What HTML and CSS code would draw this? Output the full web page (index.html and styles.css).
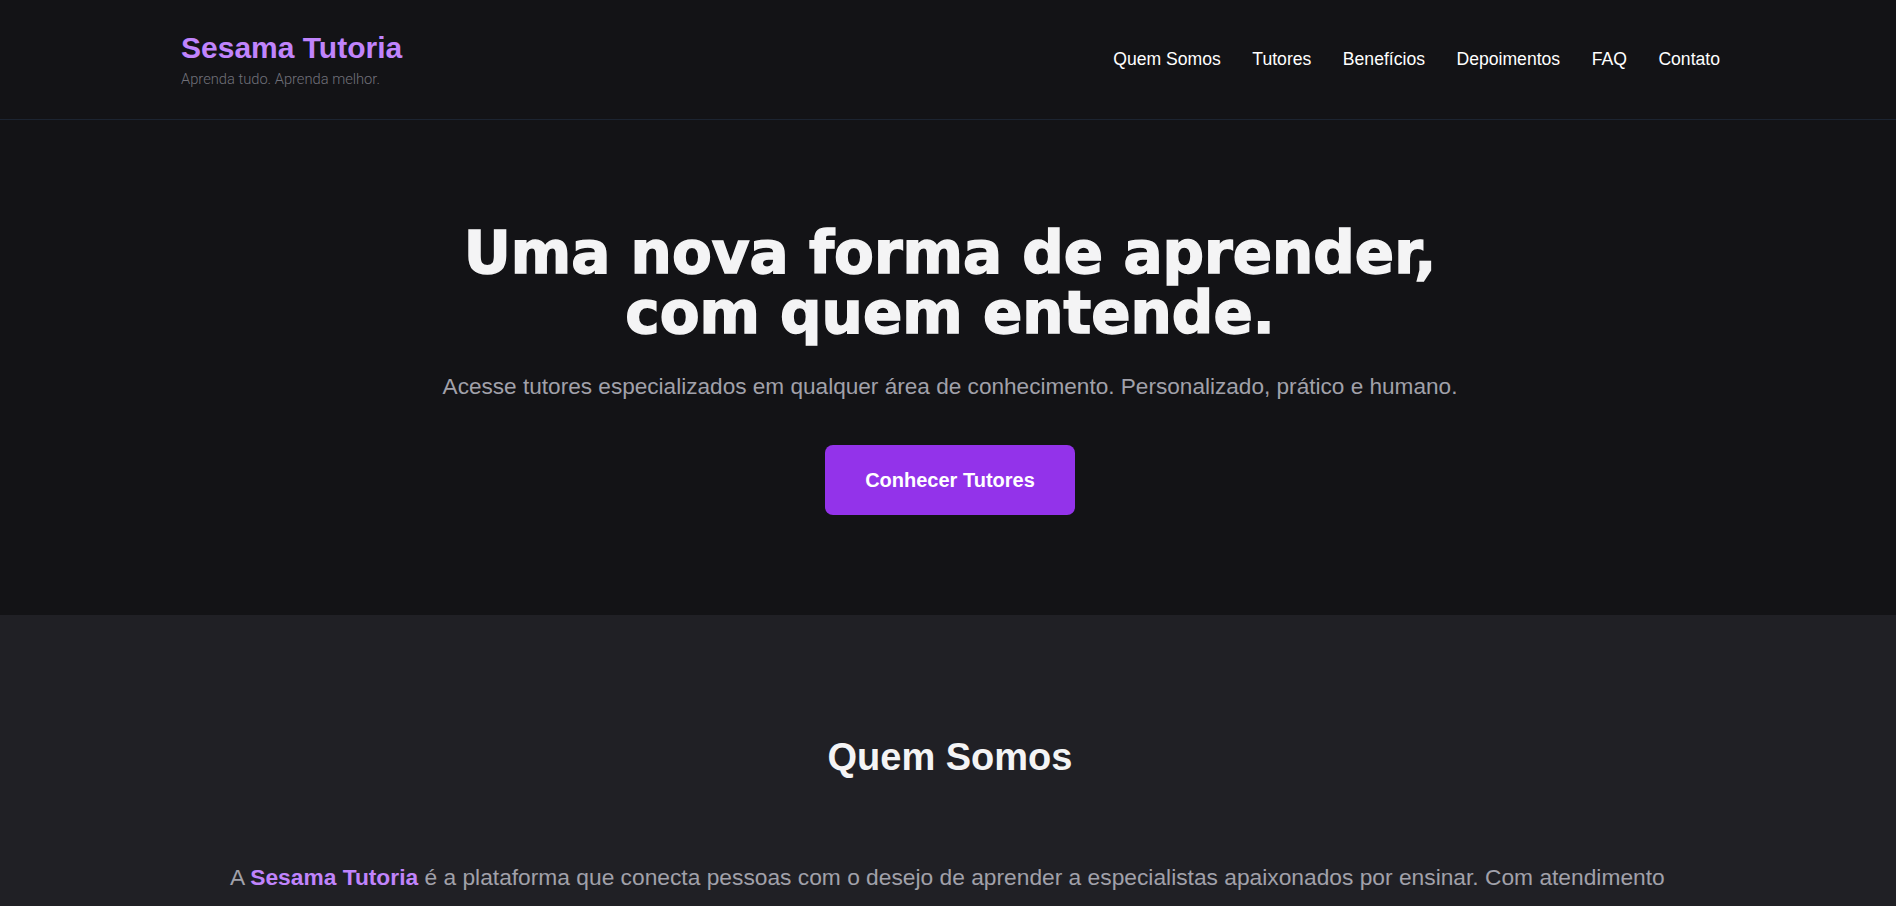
FILE: index.html
```html
<!DOCTYPE html>
<html lang="pt-BR">
<head>
<meta charset="utf-8">
<title>Sesama Tutoria</title>
<link rel="stylesheet" href="styles.css">
</head>
<body>
<header class="site-header">
  <div class="container header-inner">
    <div class="brand">
      <a class="logo" href="#">Sesama Tutoria</a>
      <span class="tagline">Aprenda tudo. Aprenda melhor.</span>
    </div>
    <nav class="main-nav">
      <a href="#quem-somos">Quem Somos</a>
      <a href="#tutores">Tutores</a>
      <a href="#beneficios">Benefícios</a>
      <a href="#depoimentos">Depoimentos</a>
      <a href="#faq">FAQ</a>
      <a href="#contato">Contato</a>
    </nav>
  </div>
</header>
<main>
  <section class="hero">
    <div class="container hero-inner">
      <h1 class="hero-title">Uma nova forma de aprender,<br>com quem entende.</h1>
      <p class="hero-sub">Acesse tutores especializados em qualquer área de conhecimento. Personalizado, prático e humano.</p>
      <a class="btn-primary" href="#tutores">Conhecer Tutores</a>
    </div>
  </section>
  <section class="about" id="quem-somos">
    <div class="container">
      <h2 class="section-title">Quem Somos</h2>
      <p class="about-text">A <strong class="brand-mention">Sesama Tutoria</strong> é a plataforma que conecta pessoas com o desejo de aprender a especialistas apaixonados por ensinar. Com atendimento personalizado e flexível, ajudamos cada aluno a alcançar seus objetivos no seu próprio ritmo.</p>
    </div>
  </section>
</main>
</body>
</html>
```
FILE: styles.css
```css
* { box-sizing: border-box; }

html, body {
  margin: 0;
  padding: 0;
}

body {
  background: #131316;
  color: #f4f4f5;
  font-family: "Liberation Sans", Arial, sans-serif;
}

a { text-decoration: none; color: inherit; }

.container {
  max-width: 1544px;
  margin: 0 auto;
  padding-left: 4px;
}

/* Header */
.site-header {
  background: #131316;
  border-bottom: 1px solid #1c2431;
}

.header-inner {
  height: 119px;
  display: flex;
  align-items: center;
  justify-content: space-between;
}

.brand {
  display: flex;
  flex-direction: column;
  gap: 4px;
  padding-left: 1px;
}

.logo {
  font-size: 30px;
  line-height: 1.2;
  font-weight: 700;
  color: #c084fc;
}

.tagline {
  font-family: Roboto, "Liberation Sans", sans-serif;
  font-weight: 300;
  font-size: 14.7px;
  line-height: 1.3;
  color: #71717a;
}

.main-nav {
  display: flex;
  gap: 31.5px;
}

.main-nav a {
  font-size: 17.6px;
  color: #ffffff;
}

/* Hero */
.hero {
  background: #131316;
  padding: 103px 0 100px;
}

.hero-inner {
  display: flex;
  flex-direction: column;
  align-items: center;
  text-align: center;
}

.hero-title {
  margin: 0 0 27px;
  font-family: "DejaVu Sans", "Liberation Sans", sans-serif;
  font-weight: 700;
  font-size: 58px;
  line-height: 60px;
  color: #f4f4f5;
  -webkit-text-stroke: 1.5px #f4f4f5;
}

.hero-sub {
  margin: 0 0 41px;
  font-size: 22.6px;
  line-height: 34px;
  color: #a1a1aa;
}

.btn-primary {
  display: inline-block;
  background: #9333ea;
  color: #ffffff;
  font-size: 20px;
  font-weight: 700;
  line-height: 22px;
  padding: 24px 40px;
  border-radius: 8px;
}

/* About */
.about {
  background: #202025;
  padding: 119px 0 100px;
}

.section-title {
  margin: 0 0 77px;
  text-align: center;
  font-size: 38px;
  line-height: 46px;
  font-weight: 700;
  color: #f4f4f5;
}

.about-text {
  max-width: 1440px;
  margin: 0 auto;
  font-size: 22.78px;
  line-height: 1.8;
  color: #a1a1aa;
}

.brand-mention {
  color: #c084fc;
  font-weight: 700;
}
```
